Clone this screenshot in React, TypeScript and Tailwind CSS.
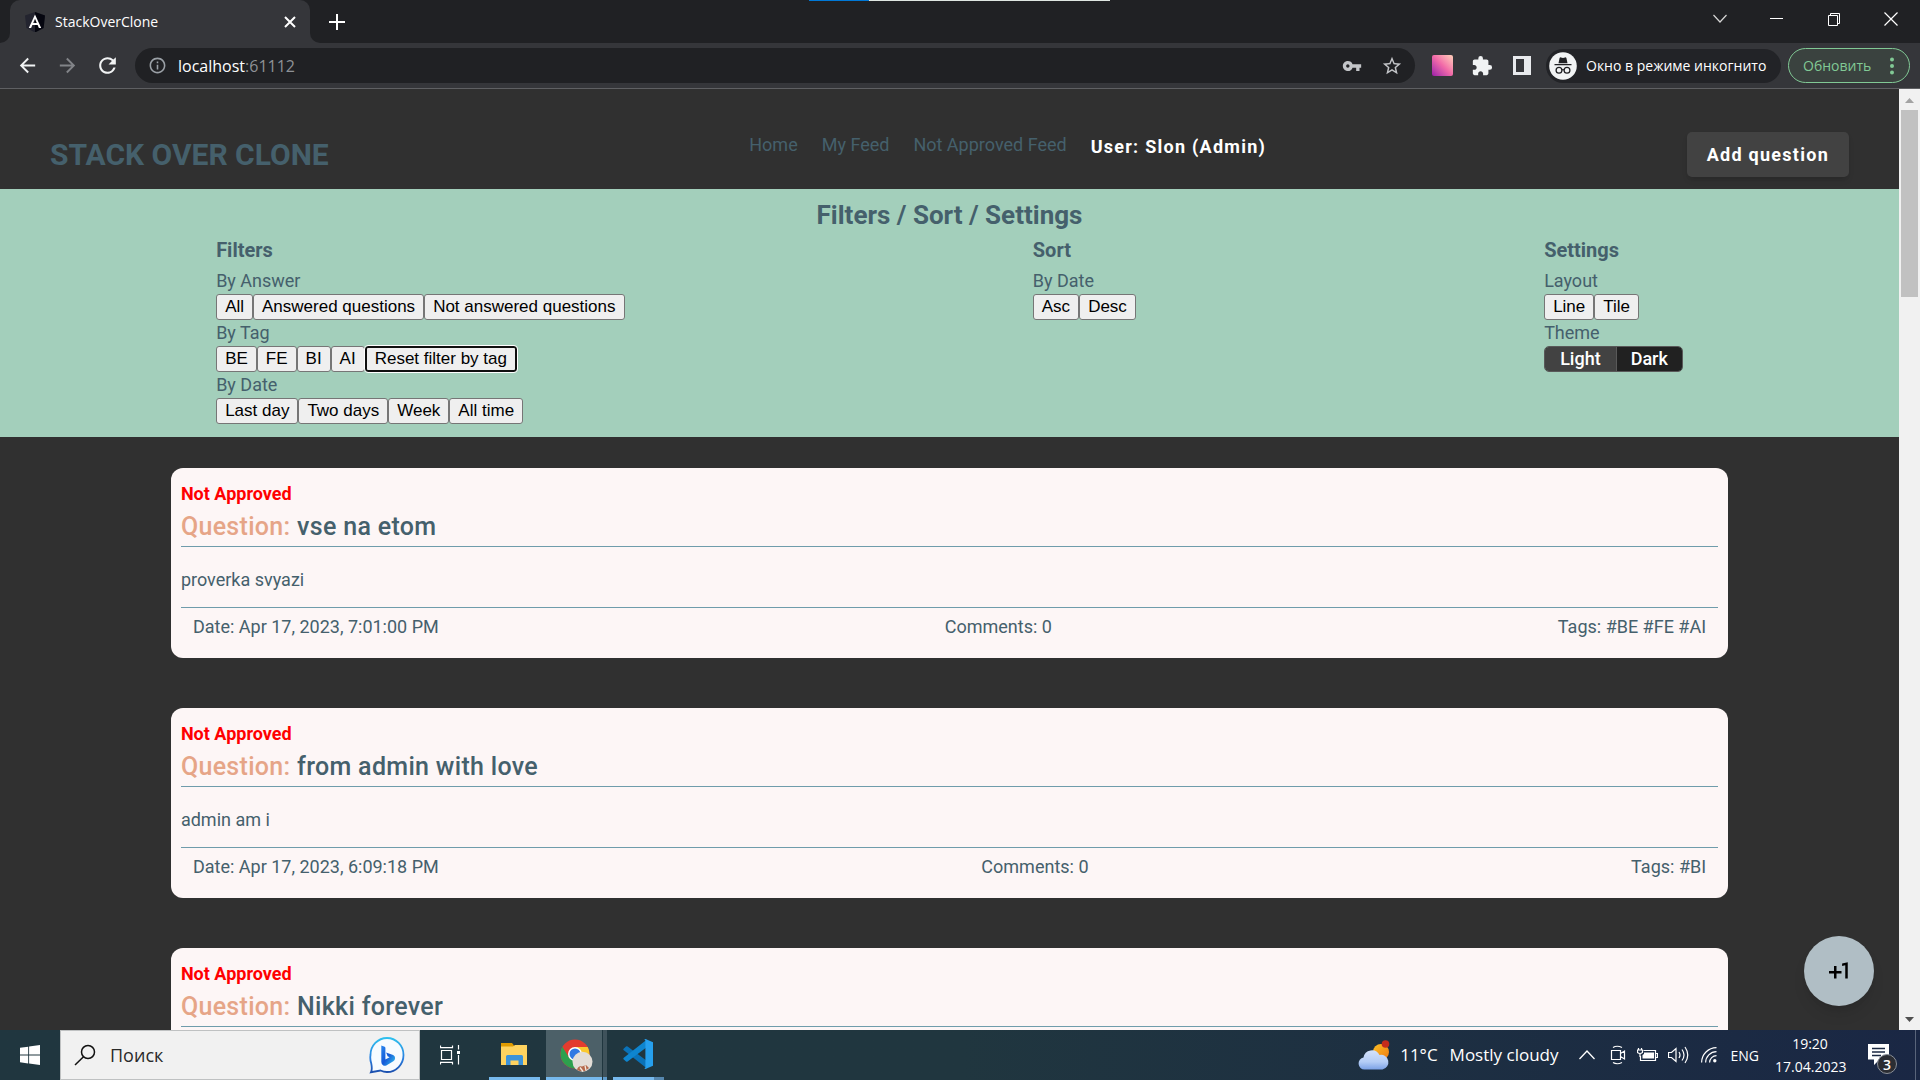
import React from "react";
import {
  MdArrowBack,
  MdArrowForward,
  MdExtension,
  MdInfoOutline,
  MdPlusOne,
  MdRefresh,
  MdStarBorder,
  MdVpnKey,
} from "react-icons/md";

type Question = {
  title: string;
  body?: string;
  meta?: { date: string; comments: number; tags: string };
};

const questions: Question[] = [
  {
    title: "vse na etom",
    body: "proverka svyazi",
    meta: { date: "Apr 17, 2023, 7:01:00 PM", comments: 0, tags: "#BE #FE #AI" },
  },
  {
    title: "from admin with love",
    body: "admin am i",
    meta: { date: "Apr 17, 2023, 6:09:18 PM", comments: 0, tags: "#BI" },
  },
  { title: "Nikki forever" },
];

const navLinks = ["Home", "My Feed", "Not Approved Feed"];

function AngularIcon() {
  return (
    <svg viewBox="0 0 20 20" className="size-5 shrink-0">
      <path d="M10 0 0 3.4 1.4 16 10 20.5 18.6 16 20 3.4Z" fill="#23242f" />
      <path d="M10 0v20.5L18.6 16 20 3.4Z" fill="#05060f" />
      <path d="M10 2.4 3.8 16h2.3l1.3-3.1h5.2l1.3 3.1h2.3Zm1.8 8.6H8.2L10 6.7Z" fill="#fff" />
    </svg>
  );
}

function TabStrip() {
  return (
    <div className="relative flex h-[43px] shrink-0 bg-[#202124]">
      <div className="absolute left-[809px] top-0 flex h-px w-[301px]">
        <span className="w-[60px] bg-[#0078d7]" />
        <span className="flex-1 bg-[#dfe6e2]" />
      </div>
      <div className="flex w-[10px] items-end bg-[#35363a]">
        <span className="h-full w-full rounded-br-[10px] bg-[#202124]" />
      </div>
      <div className="flex w-[300px] items-center rounded-t-[10px] bg-[#35363a] pl-[15px] pr-[13px]">
        <AngularIcon />
        <span className="ml-[10px] flex-1 text-[14px] text-white">StackOverClone</span>
        <button type="button" aria-label="Close tab">
          <svg viewBox="0 0 14 14" className="size-[14px]" stroke="#fff" strokeWidth="2">
            <path d="m2 2 10 10M12 2 2 12" />
          </svg>
        </button>
      </div>
      <div className="w-[10px] bg-[#35363a]">
        <span className="block h-full w-full rounded-bl-[10px] bg-[#202124]" />
      </div>
      <button type="button" aria-label="New tab" className="ml-[9px]">
        <svg viewBox="0 0 16 16" className="size-4" stroke="#fff" strokeWidth="2">
          <path d="M8 0v16M0 8h16" />
        </svg>
      </button>
      <div className="ml-auto flex h-[37px]">
        <button type="button" aria-label="Search tabs" className="flex w-[57px] items-center justify-center">
          <svg viewBox="0 0 14 10" className="w-[14px]" fill="none" stroke="#d6d6d6" strokeWidth="1.2">
            <path d="m.5 1 6.5 7 6.5-7" />
          </svg>
        </button>
        <button type="button" aria-label="Minimize" className="flex w-[57px] items-center justify-center">
          <span className="h-px w-[13px] bg-white" />
        </button>
        <button type="button" aria-label="Restore" className="flex w-[57px] items-center justify-center">
          <svg viewBox="0 0 14 14" className="size-[14px]" fill="none" stroke="#fff">
            <path d="M1.5 3.5h9v10h-9zM3.5 3.5v-2h9v10h-2" />
          </svg>
        </button>
        <button type="button" aria-label="Close" className="flex w-[58px] items-center justify-center">
          <svg viewBox="0 0 14 14" className="size-[14px]" stroke="#fff" strokeWidth="1.2">
            <path d="m.5.5 13 13M13.5.5l-13 13" />
          </svg>
        </button>
      </div>
    </div>
  );
}

function Toolbar() {
  return (
    <div className="flex h-[46px] shrink-0 items-center border-b border-[#5f6063] bg-[#35363a] pl-4 pr-[10px]">
      <button type="button" aria-label="Back">
        <MdArrowBack className="size-[23px] text-[#f1f3f4]" />
      </button>
      <button type="button" aria-label="Forward" className="ml-[17px]">
        <MdArrowForward className="size-[23px] text-[#828488]" />
      </button>
      <button type="button" aria-label="Reload" className="ml-4">
        <MdRefresh className="size-[25px] text-[#f1f3f4]" />
      </button>
      <div className="ml-[15px] flex h-[35px] flex-1 items-center rounded-full bg-[#202124] pl-[13px] pr-3">
        <MdInfoOutline className="size-[19px] text-[#9aa0a6]" />
        <div className="ml-[11px] flex-1 text-[16px] leading-[24px]">
          <span className="text-white">localhost</span>
          <span className="text-[#8e9196]">:61112</span>
        </div>
        <button type="button" aria-label="Passwords">
          <MdVpnKey className="size-5 text-[#c3c5c8]" />
        </button>
        <button type="button" aria-label="Bookmark" className="ml-[19px]">
          <MdStarBorder className="size-[22px] text-[#c3c5c8]" />
        </button>
      </div>
      <button type="button" aria-label="Gradient extension" className="ml-[17px]">
        <span className="block size-[21px] rounded-[2px] bg-linear-to-tr from-[#9c16a8] via-[#f169a8] to-[#fdd0b8]" />
      </button>
      <button type="button" aria-label="Extensions" className="ml-[18px]">
        <MdExtension className="size-[22px] text-[#f1f3f4]" />
      </button>
      <button type="button" aria-label="Side panel" className="ml-5">
        <svg viewBox="0 0 18 19" className="h-[19px] w-[18px]">
          <path d="M0 0h18v19H0zM3 3v13h8V3z" fill="#e8eaed" fillRule="evenodd" />
        </svg>
      </button>
      <div className="ml-[15px] flex h-[34px] w-[235px] items-center rounded-full bg-[#222327] pl-[3px]">
        <svg viewBox="0 0 28 28" className="size-7 shrink-0">
          <circle cx="14" cy="14" r="13.8" fill="#f1f3f4" />
          <path d="M9.5 11.2 10.6 6q.4-.9 1.4-.6l2 .6 2-.6q1-.3 1.4.6l1.1 5.2zM5.5 12h17v1.3h-17z" fill="#202124" />
          <g fill="none" stroke="#202124" strokeWidth="1.3">
            <circle cx="10" cy="18.3" r="2.9" />
            <circle cx="18" cy="18.3" r="2.9" />
            <path d="M12.9 18q1.1-.8 2.2 0" />
          </g>
        </svg>
        <span className="ml-[9px] whitespace-nowrap text-[14px] text-white">Окно в режиме инкогнито</span>
      </div>
      <button
        type="button"
        className="ml-[7px] flex h-[35px] w-[122px] items-center justify-between rounded-full border border-[#81c995] bg-[#3a423f] pl-[14px] pr-[10px] text-[14px] text-[#81c995]"
      >
        Обновить
        <svg viewBox="0 0 14 18" className="h-[18px] w-[14px]" fill="#81c995">
          <circle cx="7" cy="2.5" r="2" />
          <circle cx="7" cy="9" r="2" />
          <circle cx="7" cy="15.5" r="2" />
        </svg>
      </button>
    </div>
  );
}

function SiteHeader() {
  return (
    <header className="flex h-[100px] shrink-0 items-center justify-between px-[50px] pt-[31px]">
      <h1 className="text-[30px] font-bold leading-[36px]">STACK OVER CLONE</h1>
      <nav className="flex gap-6 pb-[18px] text-[18px] leading-[26px]">
        {navLinks.map((label) => (
          <a key={label} href="#">
            {label}
          </a>
        ))}
        <span className="pt-0.5 font-bold tracking-[0.07em] text-white">User: Slon (Admin)</span>
      </nav>
      <button
        type="button"
        className="h-[45px] rounded-[5px] bg-[#424242] px-5 text-[18px] font-bold tracking-[0.07em] text-white shadow-md"
      >
        Add question
      </button>
    </header>
  );
}

function ButtonRow({ label, options, focused }: { label: string; options: string[]; focused?: string }) {
  return (
    <div role="group" aria-label={label}>
      <div className="text-[18px] leading-[26px]">{label}</div>
      <div className="flex h-[26px]">
        {options.map((option) => (
          <button
            key={option}
            type="button"
            className={
              option === focused
                ? "relative rounded-[3px] border-2 border-[#101010] bg-[#efefef] px-2 font-['Liberation_Sans',sans-serif] text-[17px] leading-[20px] text-black outline outline-white"
                : "rounded-[3px] border border-[#767676] bg-[#efefef] px-2 font-['Liberation_Sans',sans-serif] text-[17px] leading-[20px] text-black"
            }
          >
            {option}
          </button>
        ))}
      </div>
    </div>
  );
}

function FilterPanel() {
  return (
    <section className="shrink-0 bg-[#a3cfbb] px-3 pb-[13px] pt-[10px]">
      <h2 className="text-center text-[26px] font-bold leading-[32px]">Filters / Sort / Settings</h2>
      <div className="mt-0.5 flex justify-around">
        <div>
          <h3 className="mb-px text-[20px] font-bold leading-[34px]">Filters</h3>
          <ButtonRow label="By Answer" options={["All", "Answered questions", "Not answered questions"]} />
          <ButtonRow label="By Tag" options={["BE", "FE", "BI", "AI", "Reset filter by tag"]} focused="Reset filter by tag" />
          <ButtonRow label="By Date" options={["Last day", "Two days", "Week", "All time"]} />
        </div>
        <div>
          <h3 className="mb-px text-[20px] font-bold leading-[34px]">Sort</h3>
          <ButtonRow label="By Date" options={["Asc", "Desc"]} />
        </div>
        <div>
          <h3 className="mb-px text-[20px] font-bold leading-[34px]">Settings</h3>
          <ButtonRow label="Layout" options={["Line", "Tile"]} />
          <div role="group" aria-label="Theme">
            <div className="text-[18px] leading-[26px]">Theme</div>
            <div className="flex h-[26px] overflow-hidden rounded-[5px] border border-[#595959] text-[18px] font-medium leading-[24px] text-white">
              <button type="button" className="bg-[#424242] px-[15px]">
                Light
              </button>
              <button type="button" className="border-l border-[#595959] bg-[#212121] px-[14px]">
                Dark
              </button>
            </div>
          </div>
        </div>
      </div>
    </section>
  );
}

function QuestionCard({ question }: { question: Question }) {
  return (
    <article className="shrink-0 rounded-[12px] bg-[#fdf6f6] px-[10px] pb-3 pt-[10px]">
      <div className="text-[18px] font-bold leading-[32px] text-[#ff0000]">Not Approved</div>
      <h4 className="border-b border-[#6f9cab] pb-[3px] pt-px text-[25px] font-medium leading-[32px] tracking-[0.0125em]">
        <span className="text-[#e6a587]">Question:</span> {question.title}
      </h4>
      <p className="h-[61px] border-b border-[#6f9cab] pt-1 text-[18px] leading-[58px]">{question.body}</p>
      {question.meta && (
        <footer className="flex justify-between px-3 text-[18px] leading-[38px]">
          <span>Date: {question.meta.date}</span>
          <span>Comments: {question.meta.comments}</span>
          <span>Tags: {question.meta.tags}</span>
        </footer>
      )}
    </article>
  );
}

function Scrollbar() {
  return (
    <div className="flex w-[21px] shrink-0 flex-col items-center bg-[#f1f1f1]">
      <svg viewBox="0 0 21 21" className="size-[21px]">
        <path d="M6 14h9l-4.500-5z" fill="#a3a3a3" />
      </svg>
      <div className="h-[187px] w-[17px] bg-[#c1c1c1]" />
      <svg viewBox="0 0 21 21" className="mt-auto size-[21px]">
        <path d="M6 8h9l-4.500 5z" fill="#505050" />
      </svg>
    </div>
  );
}

function BingIcon() {
  return (
    <svg viewBox="0 0 36 38" className="h-[38px] w-9">
      <defs>
        <linearGradient id="bingRing" x1="0" y1="0" x2="0" y2="1">
          <stop offset="0" stopColor="#2fc0ee" />
          <stop offset="0.6" stopColor="#2a7fe0" />
          <stop offset="1" stopColor="#1b4fae" />
        </linearGradient>
        <linearGradient id="bingLetter" x1="0" y1="0" x2="1" y2="1">
          <stop offset="0" stopColor="#2a86ee" />
          <stop offset="0.5" stopColor="#1559d8" />
          <stop offset="1" stopColor="#35c8f0" />
        </linearGradient>
      </defs>
      <path
        d="M18 2a16.500 17 0 1 1 0 34c-3 0-5-.8-6.500-1.500L2 36.200c1.500-3 .8-6 .2-9A17 17 0 0 1 1.500 19 16.500 17 0 0 1 18 2Z"
        fill="#f7fbff"
        stroke="url(#bingRing)"
        strokeWidth="1.800"
      />
      <path
        d="m12.300 9.500 3.400 1.300q.7.3.7 1.200v11.500l4.200-2.300-2-1-1.500-3.800 7 2.500q2 .8 2 3.200 0 2.200-1.800 3.200l-7 4.100q-1.500.8-3 0-2-1-2-3.400Z"
        fill="url(#bingLetter)"
      />
    </svg>
  );
}

function ChromeIcon() {
  return (
    <svg viewBox="0 0 34 34" className="size-[34px]">
      <circle cx="15" cy="15" r="14.500" fill="#e33b2e" />
      <path d="M2.400 7.800A14.500 14.500 0 0 0 15 29.500L21 18.500 9 18.500Z" fill="#2da04e" />
      <path d="M15 8h12.700A14.500 14.500 0 0 1 15 29.500L21.200 18.500Z" fill="#fbc82e" />
      <circle cx="15" cy="15" r="7" fill="#fff" />
      <circle cx="15" cy="15" r="5.500" fill="#3079e3" />
      <circle cx="22.500" cy="22.800" r="10" fill="#e3ddd7" />
      <path d="M17 31q1-4.500 5-3.500l4-1.500 3 3q-5 5.500-12 2Z" fill="#b5694c" />
      <path d="m20 28.500 3 4M25 26.500l1 5" stroke="#f3e9df" strokeWidth="1.300" />
    </svg>
  );
}

function Taskbar() {
  return (
    <div className="flex h-[50px] shrink-0 bg-linear-to-r from-[#20363f] via-[#20363f] via-50% to-[#1a2744] font-['Open_Sans',sans-serif] text-white">
      <button type="button" aria-label="Start" className="flex w-[60px] items-center justify-center">
        <svg viewBox="0 0 20 20" className="size-5" fill="#fff">
          <path d="M0 2.800 8.200 1.700v7.900H0zM9.100 1.600 20 0v9.600H9.100zM0 10.500h8.200v7.900L0 17.200zM9.100 10.500H20V20L9.100 18.500z" />
        </svg>
      </button>
      <label className="flex w-[360px] items-center border border-[#bfc1c2] bg-[#f1f1f1] pl-[13px] pr-[14px]">
        <svg viewBox="0 0 22 22" className="size-[22px] shrink-0" fill="none" stroke="#111" strokeWidth="1.500">
          <circle cx="14" cy="8" r="6.500" />
          <path d="M9.500 12.700 1 21" />
        </svg>
        <input
          type="text"
          aria-label="Поиск"
          placeholder="Поиск"
          className="ml-[14px] min-w-0 flex-1 bg-transparent text-[18px] placeholder:text-[#2a2a2a]"
        />
        <BingIcon />
      </label>
      <button type="button" aria-label="Task view" className="ml-5 flex items-center">
        <svg viewBox="0 0 22 20" className="h-5 w-[22px]" fill="none" stroke="#fff" strokeWidth="1.200">
          <path d="M1.500 5.500h10v9h-10zM.5.500v2.200h12V.500M.500 19.500v-2.200h12v2.200M18.500 0v4.500M18.500 10v9.500" />
          <path d="M17 6h3v3h-3z" fill="#fff" stroke="none" />
        </svg>
      </button>
      <button type="button" aria-label="File Explorer" className="ml-[27px] flex w-[51px] flex-col items-center">
        <span className="flex flex-1 items-center pr-0.5">
          <svg viewBox="0 0 28 24" className="h-6 w-7">
            <path d="M1 1h11l2 2.500V6H1z" fill="#e09b00" />
            <path d="M1 4.500h12L15 3h12v20H1z" fill="#ffd35f" />
            <path d="M6 23v-8.500Q6 13 7.500 13h14q1.500 0 1.500 1.500V23h-4.500v-4.500h-8V23z" fill="#3c93da" />
          </svg>
        </span>
        <span className="h-[3px] w-full bg-[#76b9ed]" />
      </button>
      <button type="button" aria-label="Chrome" className="ml-[6px] flex w-[61px]">
        <span className="flex h-full flex-1 flex-col items-center bg-[#4c6068]">
          <span className="flex flex-1 items-center pl-[6px] pt-1">
            <ChromeIcon />
          </span>
          <span className="h-[3px] w-full bg-[#76b9ed]" />
        </span>
        <span className="ml-px flex h-full w-1 flex-col justify-end bg-[#3f525b]">
          <span className="h-[3px] bg-[#5f9bcb]" />
        </span>
      </button>
      <button type="button" aria-label="Visual Studio Code" className="ml-[6px] flex w-[51px] flex-col items-center">
        <span className="flex flex-1 items-center pr-0.5">
          <svg viewBox="0 0 30 30" className="size-[30px]">
            <path d="M.8 9.500 3 7.500q.8-.6 1.600 0L24 22v7.500L.8 11.300q-1-.9 0-1.800Z" fill="#0a72b8" />
            <path d="M.8 20.500 3 22.500q.8.600 1.600 0L24 8V.500L.8 18.700q-1 .9 0 1.800Z" fill="#0e85cf" />
            <path d="M22.500 0 30 3.300v23.400L22.500 30q-1 0-1.300-.8 1.200.6 1.200-1V2q0-1.700-1.200-1.200.3-.8 1.300-.8Z" fill="#26a0ee" />
          </svg>
        </span>
        <span className="flex h-[3px] w-full">
          <span className="flex-1 bg-[#76b9ed]" />
          <span className="w-[10px] bg-[#5687ae]" />
        </span>
      </button>

      <div className="ml-auto flex items-center">
        <svg viewBox="0 0 32 30" className="h-[30px] w-8">
          <defs>
            <linearGradient id="sun" x1="0" y1="0" x2="1" y2="1">
              <stop offset="0" stopColor="#fbbf24" />
              <stop offset="1" stopColor="#f07a12" />
            </linearGradient>
            <linearGradient id="cloud" x1="0" y1="0" x2="0" y2="1">
              <stop offset="0" stopColor="#d4e2fb" />
              <stop offset="0.600" stopColor="#b4cdf6" />
              <stop offset="1" stopColor="#7ba2e6" />
            </linearGradient>
          </defs>
          <circle cx="23" cy="12" r="8" fill="url(#sun)" />
          <circle cx="27.500" cy="4" r="3.800" fill="#c42b1c" />
          <path d="M6.500 29.500a6 6 0 0 1-1-11.900A8.500 8.500 0 0 1 21.500 15a7.300 7.300 0 0 1 3 14.500Z" fill="url(#cloud)" />
        </svg>
        <span className="ml-[10px] text-[17px]">11°C</span>
        <span className="ml-3 text-[17px]">Mostly cloudy</span>
        <svg viewBox="0 0 16 10" className="ml-5 w-4" fill="none" stroke="#fff" strokeWidth="1.300">
          <path d="m.5 9 7.500-8 7.500 8" />
        </svg>
        <svg viewBox="0 0 16 20" className="ml-[15px] h-5 w-4" fill="none" stroke="#fff" strokeWidth="1.200">
          <path d="M1.500 5.500h9v9h-9zM10.500 8.500l4-2.500v8l-4-2.500M3 2.500q4-2.500 9 0M3 17.500q4 2.500 9 0" />
        </svg>
        <svg viewBox="0 0 21 14" className="ml-[11px] h-[14px] w-[21px]" fill="none" stroke="#fff" strokeWidth="1.200">
          <path d="M6.500 2.500h12v10H3.500V8M19 5.500h1.500v4H19M1.500 0v2M4.500 0v2M.500 2h5v2.500q-2.500 2-5 0zM3 6v3" />
          <path d="M7 4.500h10v6H5.500V7L7 6z" fill="#fff" stroke="none" />
        </svg>
        <svg viewBox="0 0 21 18" className="ml-[10px] h-[18px] w-[21px]" fill="none" stroke="#fff" strokeWidth="1.200">
          <path d="M.500 6.500h3L8 2.500v13l-4.500-4h-3zM11 6q2 3 0 6M14 3.500q4 5.500 0 11M17 1q5.500 8 0 16" />
        </svg>
        <svg viewBox="0 0 16 16" className="ml-3 size-4" fill="none" stroke="#fff" strokeWidth="1.200">
          <path d="M.6 15.500A15 15 0 0 1 15.500.6M4.600 15.500A11 11 0 0 1 15.500 4.600M8.600 15.500a7 7 0 0 1 6.900-6.900" />
          <circle cx="13.800" cy="13.800" r="1.700" fill="#fff" stroke="none" />
        </svg>
        <span className="ml-[14px] text-[14px]">ENG</span>
        <div className="ml-4 w-[70px] text-center text-[14px] leading-[23px]">
          <div>19:20</div>
          <div>17.04.2023</div>
        </div>
        <div className="relative ml-[23px] h-[22px] w-[21px]">
          <svg viewBox="0 0 21 21" className="size-[21px]">
            <path d="M0 0h21v15.500h-9.500L6 21v-5.500H0z" fill="#fff" />
            <path d="M4 4.500h13M4 8h13M4 11.500h9" stroke="#1b2842" strokeWidth="1.300" />
          </svg>
          <span className="absolute left-[9px] top-[10px] flex size-5 items-center justify-center rounded-full border border-[#8a8f98] bg-[#2b2d33] text-[14px] font-semibold">
            3
          </span>
        </div>
      </div>
      <span className="ml-[26px] mr-1 w-px bg-[#59647a]" />
    </div>
  );
}

export default function App() {
  return (
    <div className="flex h-screen flex-col overflow-hidden bg-[#303030] font-['Open_Sans',sans-serif]">
      <TabStrip />
      <Toolbar />
      <div className="relative flex min-h-0 flex-1">
        <main className="flex min-w-0 flex-1 flex-col overflow-hidden font-[Roboto,sans-serif] text-[#45606c]">
          <SiteHeader />
          <FilterPanel />
          <div className="mx-auto flex w-[82%] flex-col gap-[50px] pt-[31px]">
            {questions.map((question) => (
              <QuestionCard key={question.title} question={question} />
            ))}
          </div>
        </main>
        <Scrollbar />
        <button
          type="button"
          aria-label="Plus one"
          className="absolute bottom-6 right-[46px] flex size-[70px] items-center justify-center rounded-full bg-[#b0bec5] text-black shadow-lg"
        >
          <MdPlusOne className="size-[30px]" />
        </button>
      </div>
      <Taskbar />
    </div>
  );
}
